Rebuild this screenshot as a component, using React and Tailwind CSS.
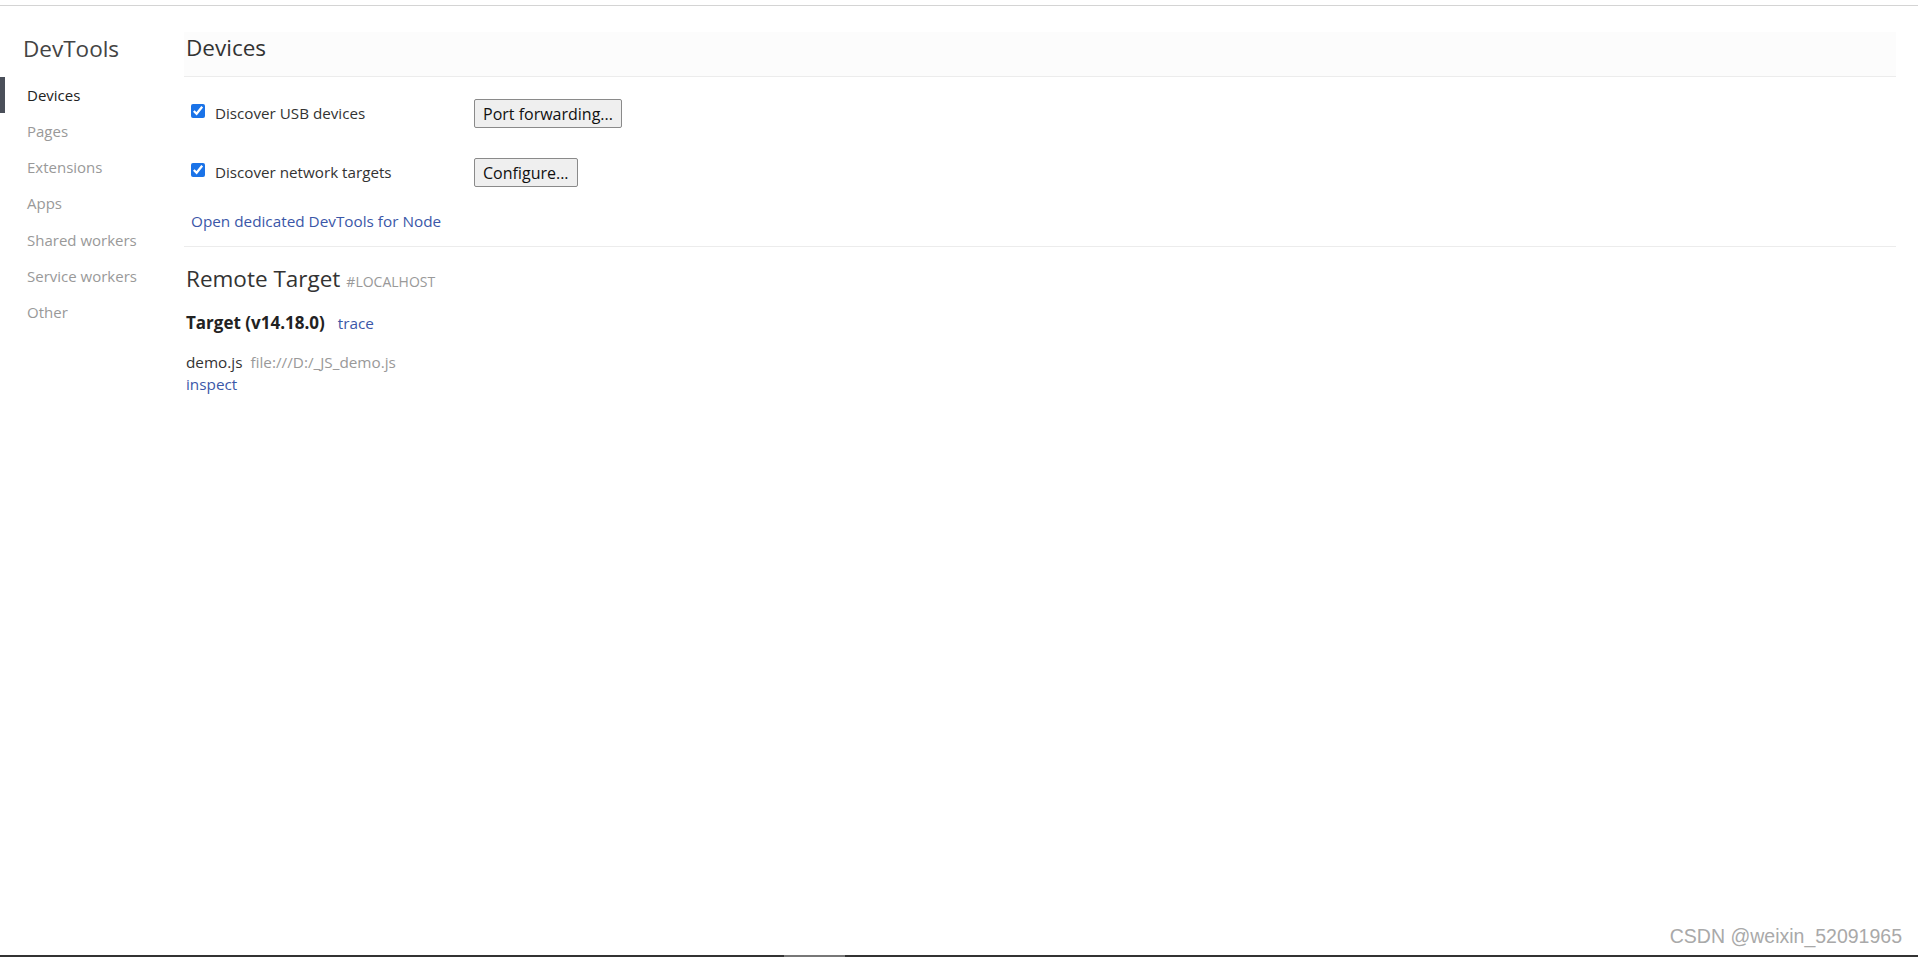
const navItems = ['Devices', 'Pages', 'Extensions', 'Apps', 'Shared workers', 'Service workers', 'Other'];

function Sidebar() {
    return (
        <aside className="w-[184px] shrink-0">
            <h1 className="h-[46px] pl-[23px] pt-[8px] text-[22.5px] leading-[30px] text-[#444]">DevTools</h1>
            <ul className="mt-[5px]">
                {navItems.map((item, i) => (
                    <li
                        key={item}
                        className={
                            i === 0
                                ? 'h-[36.2px] flex items-center pl-[22px] border-l-[5px] border-[#4a4f59] text-[15px] text-[#222]'
                                : 'h-[36.2px] flex items-center pl-[27px] text-[15px] text-[#999]'
                        }
                    >
                        {item}
                    </li>
                ))}
            </ul>
        </aside>
    );
}

function CheckRow({ label, button }) {
    return (
        <div className="h-[59px] flex items-center pl-[7px]">
            <label className="w-[283px] flex items-center gap-[10px] text-[15.2px] text-[#333]">
                <input type="checkbox" defaultChecked className="w-[14px] h-[14px] m-0 accent-[#1a73e8] -translate-y-[2px]" />
                Discover {label}
            </label>
            <button className="h-[29px] px-[8px] bg-[#efefef] border border-[#8a8a8a] rounded-[2px] text-[16px] text-[#111] leading-none">
                {button}
            </button>
        </div>
    );
}

export default function App() {
    return (
        <div className="h-screen w-full flex flex-col bg-white relative overflow-hidden" style={{ fontFamily: '"Open Sans", "Noto Sans", sans-serif' }}>
            <div className="h-[6px] border-b border-[#d4d4d4] shrink-0" />
            <div className="flex-1 flex pt-[20px]">
                <Sidebar />
                <main className="flex-1 pr-[22px]">
                    <div className="mt-[6px] h-[45px] bg-[#fcfcfc] border-b border-[#ececec] pl-[2px] pt-[1px]">
                        <h2 className="text-[22.5px] leading-[30px] text-[#333]">Devices</h2>
                    </div>
                    <div className="pt-[7px]">
                        <CheckRow label="USB devices" button="Port forwarding..." />
                        <CheckRow label="network targets" button="Configure..." />
                        <div className="pl-[7px] mt-[2px] h-[34px] flex items-center text-[15.3px] text-[#3b57a8]">
                            Open dedicated DevTools for Node
                        </div>
                    </div>
                    <div className="mt-[8px] border-t border-[#ececec] pt-[17px] pl-[2px]">
                        <div className="flex items-baseline gap-[6px]">
                            <span className="text-[22.5px] leading-[30px] text-[#333]">Remote Target</span>
                            <span className="text-[14px] text-[#999]">#LOCALHOST</span>
                        </div>
                        <div className="mt-[16px] flex items-baseline gap-[13px]">
                            <span className="text-[17px] font-bold text-[#222]">Target (v14.18.0)</span>
                            <span className="text-[15.3px] text-[#3b57a8]">trace</span>
                        </div>
                        <div className="mt-[15px] flex items-baseline gap-[8px] text-[15.3px] leading-[22px]">
                            <span className="text-[#333]">demo.js</span>
                            <span className="text-[#999]">file:///D:/_JS_demo.js</span>
                        </div>
                        <div className="text-[15.3px] leading-[22px] text-[#3b57a8]">inspect</div>
                    </div>
                </main>
            </div>
            <div className="h-[2px] bg-[#333] shrink-0 flex">
                <div className="ml-[784px] w-[61px] bg-[#777]" />
            </div>
            <div
                className="absolute right-[16px] bottom-[6px] text-[19.5px] text-[#a9a9a9]"
                style={{ fontFamily: '"Liberation Sans", Arial, sans-serif' }}
            >
                CSDN @weixin_52091965
            </div>
        </div>
    );
}
